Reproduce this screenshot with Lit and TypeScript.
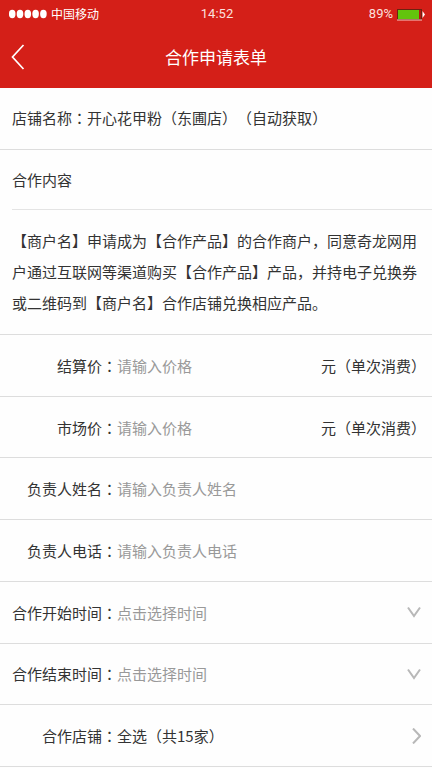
import { LitElement, html, css, svg } from "lit";
import { customElement } from "lit/decorators.js";

const colon = html`<span class="mark">：</span>`;
const open = html`<span class="mark">（</span>`;
const close = html`<span class="mark">）</span>`;

const chevronDown = html`<svg class="chevron" width="14" height="16" viewBox="0 0 14 16" aria-hidden="true">
  <path d="M1 3.5L7 12L13 3.5" />
</svg>`;
const chevronRight = html`<svg class="chevron" width="14" height="16" viewBox="0 0 14 16" aria-hidden="true">
  <path d="M6 0.5L13 8L6 15.5" />
</svg>`;

@customElement("app-root")
export class AppRoot extends LitElement {
  static styles = css`
    :host {
      display: flex;
      flex-direction: column;
      box-sizing: border-box;
      min-height: 100vh;
      padding-bottom: 1px;
      background: #fefefe;
      color: #333;
      font: 15px/31px "Noto Sans CJK SC", sans-serif;
      text-spacing-trim: space-all;
    }
    * {
      box-sizing: border-box;
    }
    .mark {
      font-family: "Noto Sans CJK TC", sans-serif;
    }
    .top {
      height: 88px;
      background: #d41f18;
      color: #fff;
    }
    .status {
      display: grid;
      grid-template-columns: 1fr auto 1fr;
      align-items: center;
      height: 28px;
      padding: 0 7px 0 9px;
      font: 13px/28px Roboto, sans-serif;
      color: #fbe0df;
    }
    .carrier {
      display: flex;
      align-items: center;
      gap: 4px;
      font: 12px/26px "Noto Sans CJK SC", sans-serif;
      color: #fff;
    }
    .power {
      display: flex;
      align-items: center;
      justify-content: flex-end;
      gap: 4px;
    }
    .bar {
      display: grid;
      grid-template-columns: 48px 1fr 48px;
      align-items: center;
      height: 58px;
    }
    .back {
      display: flex;
      align-items: center;
      height: 48px;
      padding: 0 0 0 11px;
      border: 0;
      background: none;
    }
    h1 {
      margin: 0;
      padding-bottom: 2px;
      text-align: center;
      font-size: 17px;
      font-weight: 400;
    }
    .line {
      margin: 0;
      padding: 14px 12px 16px;
      border-bottom: 1px solid #ddd;
    }
    h2 {
      margin: 0 0 0 12px;
      padding: 14px 0;
      border-bottom: 1px solid #e4e4e4;
      font-size: 15px;
      font-weight: 400;
    }
    .terms {
      margin: 0;
      padding: 15px 12px 16px;
      border-bottom: 1px solid #ddd;
    }
    .fields {
      flex: 1;
      display: grid;
      grid-auto-rows: minmax(48px, 1fr);
    }
    .row {
      display: flex;
      align-items: center;
      padding: 0 6px 0 12px;
      border-bottom: 1px solid #ddd;
    }
    .row.pick {
      padding-right: 11px;
    }
    .name {
      flex: none;
      width: 105px;
      text-align: right;
      white-space: nowrap;
    }
    .control {
      flex: 1;
      min-width: 0;
      height: 31px;
      margin: 0;
      padding: 0;
      border: 0;
      outline: 0;
      background: none;
      appearance: none;
      color: #333;
      font: inherit;
      text-align: left;
      text-spacing-trim: inherit;
    }
    .control::placeholder {
      color: #999;
      opacity: 1;
    }
    select.control {
      color: #999;
    }
    .unit {
      white-space: nowrap;
    }
    .chevron {
      flex: none;
      fill: none;
      stroke: #b8b8b8;
      stroke-width: 2;
    }
  `;

  private textRow(id: string, name: string, hint: string, unit = false) {
    return html`<div class="row">
      <label class="name" for=${id}>${name}${colon}</label>
      <input class="control" id=${id} type="text" placeholder=${hint} />
      ${unit ? html`<span class="unit">元${open}单次消费${close}</span>` : null}
    </div>`;
  }

  private timeRow(id: string, name: string) {
    return html`<div class="row pick">
      <label class="name" for=${id}>${name}${colon}</label>
      <select class="control" id=${id}><option>点击选择时间</option></select>
      ${chevronDown}
    </div>`;
  }

  render() {
    return html`
      <header class="top">
        <div class="status">
          <span class="carrier">
            <svg width="38" height="10" viewBox="0 0 38 10" fill="#fff" aria-hidden="true">
              ${[3.2, 11, 18.8, 26.6, 34.4].map((x) => svg`<ellipse cx=${x} cy="5" rx="3.3" ry="4.2" />`)}
            </svg>
            中国移动
          </span>
          <span>14:52</span>
          <span class="power">
            89%
            <svg width="28" height="14" viewBox="0 0 28 14" aria-hidden="true">
              <rect x="0.5" y="2.5" width="24" height="10" fill="#b3150f" stroke="#6b2310" />
              <rect x="1" y="3" width="21" height="9" fill="#63c40c" />
              <path d="M0 13H25" stroke="#f7c9c5" />
              <path d="M25.5 4L28 7.5L25.5 11Z" fill="#fff" />
            </svg>
          </span>
        </div>
        <div class="bar">
          <button class="back" type="button" aria-label="返回">
            <svg width="14" height="26" viewBox="0 0 14 26" fill="none" stroke="#fff" stroke-width="1.7" aria-hidden="true">
              <path d="M12.5 1L1.5 13L12.5 25" />
            </svg>
          </button>
          <h1>合作申请表单</h1>
        </div>
      </header>
      <p class="line">店铺名称${colon}开心花甲粉${open}东圃店${close}${open}自动获取${close}</p>
      <h2>合作内容</h2>
      <p class="terms">【商户名】申请成为【合作产品】的合作商户，同意奇龙网用户通过互联网等渠道购买【合作产品】产品，并持电子兑换券或二维码到【商户名】合作店铺兑换相应产品。</p>
      <form class="fields">
        ${this.textRow("settle", "结算价", "请输入价格", true)}
        ${this.textRow("market", "市场价", "请输入价格", true)}
        ${this.textRow("owner", "负责人姓名", "请输入负责人姓名")}
        ${this.textRow("phone", "负责人电话", "请输入负责人电话")}
        ${this.timeRow("start", "合作开始时间")}
        ${this.timeRow("end", "合作结束时间")}
        <div class="row pick">
          <label class="name" for="shops">合作店铺${colon}</label>
          <button class="control" id="shops" type="button">全选${open}共15家${close}</button>
          ${chevronRight}
        </div>
      </form>
    `;
  }
}
